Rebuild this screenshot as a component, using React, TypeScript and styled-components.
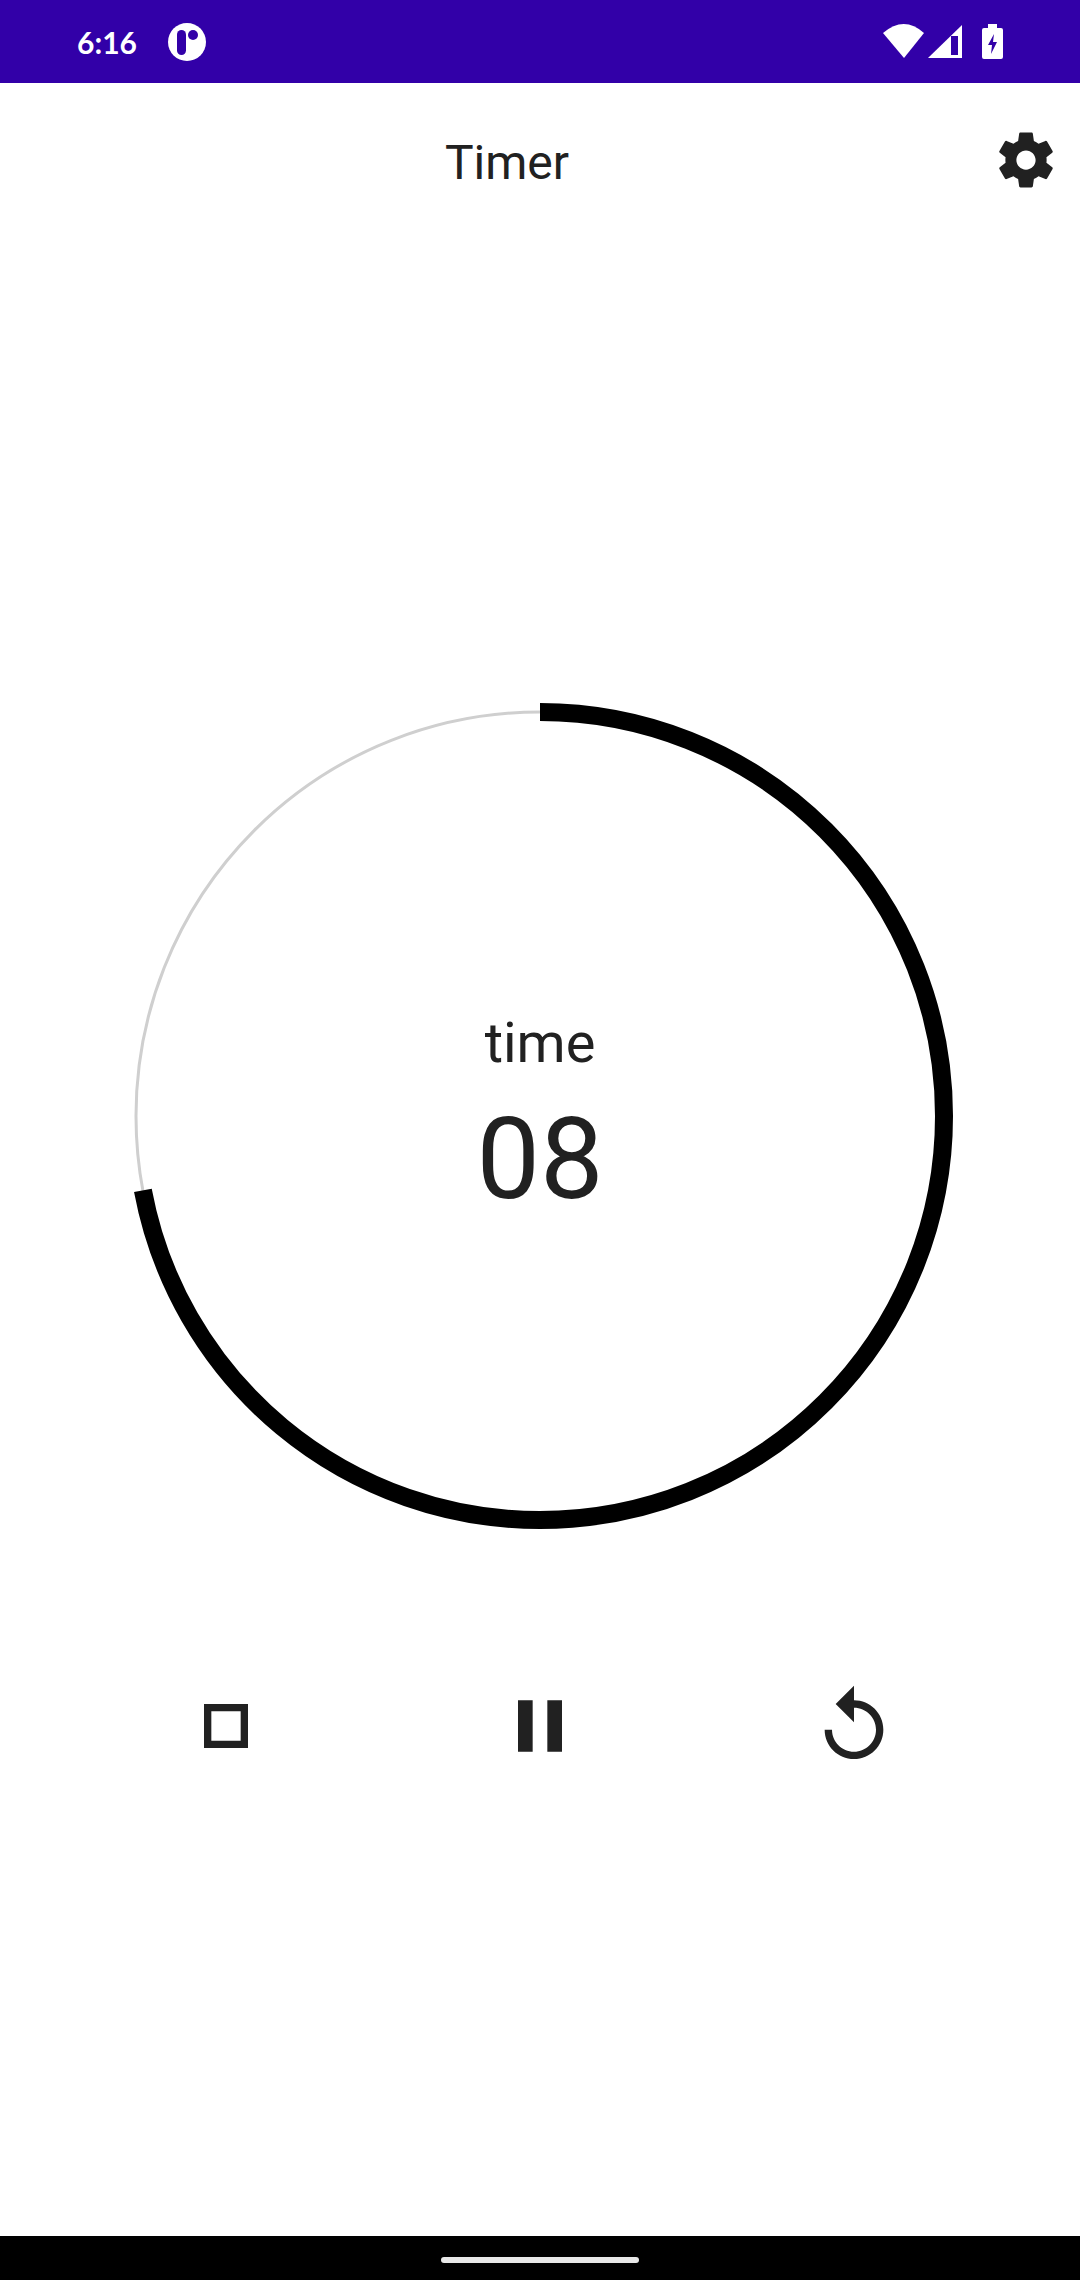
import React from 'react';
import styled, { createGlobalStyle } from 'styled-components';

const GlobalStyle = createGlobalStyle`
  html, body {
    margin: 0;
    padding: 0;
    background: #fff;
  }
  body {
    font-family: Roboto, "Noto Sans", sans-serif;
  }
`;

const Screen = styled.div`
  width: 1080px;
  height: 2280px;
  display: flex;
  flex-direction: column;
  overflow: hidden;
  background: #fff;
  color: #212121;
`;

const StatusBar = styled.div`
  height: 83px;
  flex: none;
  display: flex;
  align-items: center;
  padding: 0 77px 0 77px;
  box-sizing: border-box;
  background: #3200a8;
  color: #fff;
`;

const Clock = styled.span`
  font-family: Lato, sans-serif;
  font-size: 30px;
  font-weight: 700;
  line-height: 1;
  width: 91px;
`;

const StatusIcons = styled.div`
  margin-left: auto;
  display: flex;
  align-items: center;
`;

const AppBar = styled.header`
  height: 154px;
  flex: none;
  display: flex;
  align-items: center;
  padding: 0 21px;
`;

const Title = styled.h1`
  flex: 1;
  margin: 5px 0 0;
  text-align: center;
  font-size: 48px;
  font-weight: 450;
  line-height: 1;
`;

const Main = styled.main`
  flex: 1;
  display: flex;
  flex-direction: column;
  align-items: center;
  padding-top: 466px;
`;

const RingStack = styled.div`
  display: grid;
  width: 826px;
  height: 826px;
  & > * {
    grid-area: 1 / 1;
  }
`;

const RingText = styled.div`
  display: flex;
  flex-direction: column;
  align-items: center;
  justify-content: center;
  gap: 20px;
  padding-top: 3px;
`;

const Label = styled.span`
  font-size: 56px;
  line-height: 64px;
`;

const Count = styled.span`
  font-size: 113px;
  line-height: 129px;
`;

const Controls = styled.div`
  margin-top: 153px;
  display: grid;
  grid-template-columns: repeat(3, 314px);
  justify-items: center;
`;

const NavBar = styled.div`
  height: 44px;
  flex: none;
  display: flex;
  justify-content: center;
  padding-top: 21px;
  box-sizing: border-box;
  background: #000;
`;

const HomeHandle = styled.div`
  width: 198px;
  height: 6px;
  border-radius: 3px;
  background: #e8e8e8;
`;

const Icon = ({ d, size }: { d: string; size: number }) => (
  <svg width={size} height={size} viewBox="0 0 24 24" fill="#212121">
    <path d={d} />
  </svg>
);

const settingsPath =
  'M19.43 12.98c.04-.32.07-.64.07-.98s-.03-.66-.07-.98l2.11-1.65c.19-.15.24-.42.12-.64l-2-3.46c-.12-.22-.39-.3-.61-.22l-2.49 1c-.52-.4-1.08-.73-1.69-.98l-.38-2.65C14.46 2.18 14.25 2 14 2h-4c-.25 0-.46.18-.49.42l-.38 2.65c-.61.25-1.17.59-1.69.98l-2.49-1c-.23-.09-.49 0-.61.22l-2 3.46c-.13.22-.07.49.12.64l2.11 1.65c-.04.32-.07.65-.07.98s.03.66.07.98l-2.11 1.65c-.19.15-.24.42-.12.64l2 3.46c.12.22.39.3.61.22l2.49-1c.52.4 1.08.73 1.69.98l.38 2.65c.03.24.24.42.49.42h4c.25 0 .46-.18.49-.42l.38-2.65c.61-.25 1.17-.59 1.69-.98l2.49 1c.23.09.49 0 .61-.22l2-3.46c.12-.22.07-.49-.12-.64l-2.11-1.65zM12 15.5c-1.93 0-3.5-1.57-3.5-3.5s1.57-3.5 3.5-3.5 3.5 1.57 3.5 3.5-1.57 3.5-3.5 3.5z';
const stopPath = 'M16 8v8H8V8h8m2-2H6v12h12V6z';
const pausePath = 'M6 19h4V5H6v14zm8-14v14h4V5h-4z';
const replayPath =
  'M12 5V1L7 6l5 5V7c3.31 0 6 2.69 6 6s-2.69 6-6 6-6-2.69-6-6H4c0 4.42 3.58 8 8 8s8-3.58 8-8-3.58-8-8-8z';

const AppBadge = () => (
  <svg width="38" height="38" viewBox="0 0 38 38">
    <circle cx="19" cy="19" r="19" fill="#fff" />
    <rect x="9" y="7" width="9" height="25" rx="4.5" fill="#3200a8" />
    <circle cx="25" cy="12" r="5" fill="#3200a8" />
  </svg>
);

const StatusGlyphs = () => (
  <svg width="120" height="36" viewBox="883 25 120 36">
    <path d="M883 34 Q904 16 924 34 L904 59 Z" fill="#fff" />
    <path d="M962 26 V59 H928 Z" fill="#fff" />
    <rect x="951" y="37" width="7" height="19" fill="#3200a8" />
    <path
      d="M988 25 h9 v4 h4 a2 2 0 0 1 2 2 v27 a2 2 0 0 1 -2 2 h-17 a2 2 0 0 1 -2 -2 v-27 a2 2 0 0 1 2 -2 h4 Z"
      fill="#fff"
    />
    <path d="M994 35 L988 46 H992 L991 55 L997 43 H993 Z" fill="#3200a8" />
  </svg>
);

const TimerRing = ({ degrees }: { degrees: number }) => (
  <svg width="826" height="826" viewBox="0 0 826 826">
    <circle cx="413" cy="413" r="404" fill="none" stroke="#cfcfcf" strokeWidth="3" />
    <circle
      cx="413"
      cy="413"
      r="404"
      fill="none"
      stroke="#000"
      strokeWidth="18"
      pathLength={360}
      strokeDasharray={`${degrees} 360`}
      transform="rotate(-90 413 413)"
    />
  </svg>
);

export default function App() {
  return (
    <Screen>
      <GlobalStyle />
      <StatusBar>
        <Clock>6:16</Clock>
        <AppBadge />
        <StatusIcons>
          <StatusGlyphs />
        </StatusIcons>
      </StatusBar>
      <AppBar>
        <Title>Timer</Title>
        <Icon d={settingsPath} size={66} />
      </AppBar>
      <Main>
        <RingStack>
          <TimerRing degrees={259.4} />
          <RingText>
            <Label>time</Label>
            <Count>08</Count>
          </RingText>
        </RingStack>
        <Controls>
          <Icon d={stopPath} size={88} />
          <Icon d={pausePath} size={88} />
          <Icon d={replayPath} size={88} />
        </Controls>
      </Main>
      <NavBar>
        <HomeHandle />
      </NavBar>
    </Screen>
  );
}
